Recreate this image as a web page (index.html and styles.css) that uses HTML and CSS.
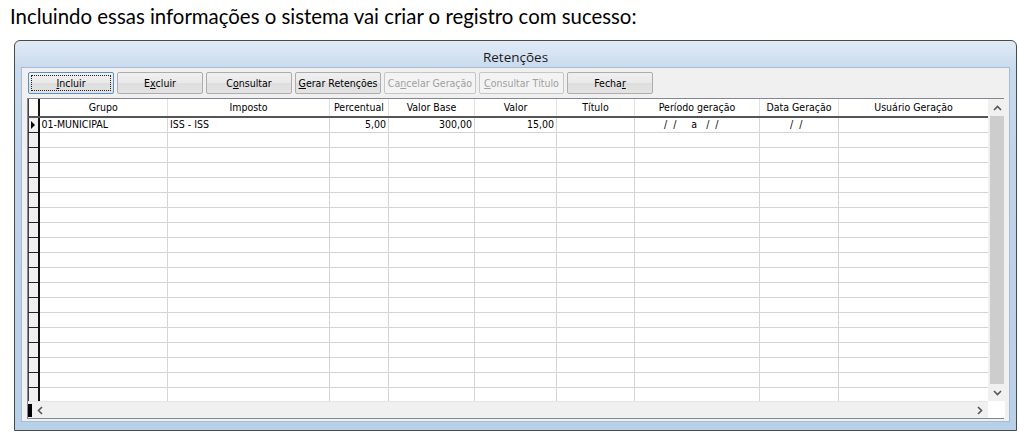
FILE: index.html
```html
<!DOCTYPE html>
<html lang="pt-BR">
<head>
<meta charset="utf-8">
<title>Retenções</title>
<link rel="stylesheet" href="styles.css">
</head>
<body>
<p class="caption">Incluindo essas informações o sistema vai criar o registro com sucesso:</p>
<div class="window">
  <div class="title">Retenções</div>
  <div class="client">
    <div class="toolbar">
      <button class="btn focus w86"><span class="focusrect"><u>I</u>ncluir</span></button>
      <button class="btn w86">E<u>x</u>cluir</button>
      <button class="btn w86">C<u>o</u>nsultar</button>
      <button class="btn w86"><u>G</u>erar Retenções</button>
      <button class="btn dis w92">Ca<u>n</u>celar Geração</button>
      <button class="btn dis w85"><u>C</u>onsultar Título</button>
      <button class="btn w86">Fecha<u>r</u></button>
    </div>
    <div class="grid">
      <div class="data">
        <table class="tbl">
          <colgroup>
            <col class="c-ind"><col class="c-grupo"><col class="c-imp"><col class="c-perc"><col class="c-vb"><col class="c-val"><col class="c-tit"><col class="c-per"><col class="c-dg"><col class="c-ug">
          </colgroup>
          <thead>
            <tr>
              <th class="ind"></th><th>Grupo</th><th>Imposto</th><th>Percentual</th><th>Valor Base</th><th>Valor</th><th>Título</th><th>Período geração</th><th>Data Geração</th><th>Usuário Geração</th>
            </tr>
          </thead>
          <tbody>
            <tr>
              <td class="ind"><span class="arrow"></span></td><td>01-MUNICIPAL</td><td>ISS - ISS</td><td class="r">5,00</td><td class="r">300,00</td><td class="r">15,00</td><td></td><td class="mask pm">/  /     a   /  /</td><td class="mask dm">/  /</td><td></td>
            </tr>
            <tr><td class="ind"></td><td></td><td></td><td></td><td></td><td></td><td></td><td></td><td></td><td></td></tr>
            <tr><td class="ind"></td><td></td><td></td><td></td><td></td><td></td><td></td><td></td><td></td><td></td></tr>
            <tr><td class="ind"></td><td></td><td></td><td></td><td></td><td></td><td></td><td></td><td></td><td></td></tr>
            <tr><td class="ind"></td><td></td><td></td><td></td><td></td><td></td><td></td><td></td><td></td><td></td></tr>
            <tr><td class="ind"></td><td></td><td></td><td></td><td></td><td></td><td></td><td></td><td></td><td></td></tr>
            <tr><td class="ind"></td><td></td><td></td><td></td><td></td><td></td><td></td><td></td><td></td><td></td></tr>
            <tr><td class="ind"></td><td></td><td></td><td></td><td></td><td></td><td></td><td></td><td></td><td></td></tr>
            <tr><td class="ind"></td><td></td><td></td><td></td><td></td><td></td><td></td><td></td><td></td><td></td></tr>
            <tr><td class="ind"></td><td></td><td></td><td></td><td></td><td></td><td></td><td></td><td></td><td></td></tr>
            <tr><td class="ind"></td><td></td><td></td><td></td><td></td><td></td><td></td><td></td><td></td><td></td></tr>
            <tr><td class="ind"></td><td></td><td></td><td></td><td></td><td></td><td></td><td></td><td></td><td></td></tr>
            <tr><td class="ind"></td><td></td><td></td><td></td><td></td><td></td><td></td><td></td><td></td><td></td></tr>
            <tr><td class="ind"></td><td></td><td></td><td></td><td></td><td></td><td></td><td></td><td></td><td></td></tr>
            <tr><td class="ind"></td><td></td><td></td><td></td><td></td><td></td><td></td><td></td><td></td><td></td></tr>
            <tr><td class="ind"></td><td></td><td></td><td></td><td></td><td></td><td></td><td></td><td></td><td></td></tr>
            <tr><td class="ind"></td><td></td><td></td><td></td><td></td><td></td><td></td><td></td><td></td><td></td></tr>
            <tr><td class="ind"></td><td></td><td></td><td></td><td></td><td></td><td></td><td></td><td></td><td></td></tr>
            <tr><td class="ind"></td><td></td><td></td><td></td><td></td><td></td><td></td><td></td><td></td><td></td></tr>
            <tr><td class="ind"></td><td></td><td></td><td></td><td></td><td></td><td></td><td></td><td></td><td></td></tr>
          </tbody>
        </table>
      </div>
      <div class="vscroll">
        <div class="sbtn">
          <svg width="9" height="6" viewBox="0 0 9 6"><polyline points="1,5 4.5,1.5 8,5" fill="none" stroke="#555" stroke-width="1.6"/></svg>
        </div>
        <div class="thumb"></div>
        <div class="sbtn">
          <svg width="9" height="6" viewBox="0 0 9 6"><polyline points="1,1 4.5,4.5 8,1" fill="none" stroke="#555" stroke-width="1.6"/></svg>
        </div>
      </div>
      <div class="hscroll">
        <span class="hthumb"></span>
        <span class="hbtn">
          <svg width="6" height="9" viewBox="0 0 6 9"><polyline points="5,1 1.5,4.5 5,8" fill="none" stroke="#555" stroke-width="1.6"/></svg>
        </span>
        <span class="htrack"></span>
        <span class="hbtn">
          <svg width="6" height="9" viewBox="0 0 6 9"><polyline points="1,1 4.5,4.5 1,8" fill="none" stroke="#555" stroke-width="1.6"/></svg>
        </span>
      </div>
      <div class="corner"></div>
    </div>
  </div>
</div>
</body>
</html>
```

FILE: styles.css
```css
* { box-sizing: border-box; }

html, body {
  margin: 0;
  padding: 0;
  background: #ffffff;
}

body {
  width: 1019px;
  height: 432px;
  overflow: hidden;
}

.caption {
  margin: 0;
  height: 40px;
  padding: 3px 0 0 10px;
  font-family: Lato, "Open Sans", "Liberation Sans", sans-serif;
  font-size: 20.4px;
  line-height: 26px;
  color: #000;
}

.window {
  margin-left: 14px;
  width: 1003px;
  height: 391px;
  border: 1px solid #4b4b4b;
  border-radius: 6px 6px 0 0;
  background: linear-gradient(to bottom, #e2ebf6 0px, #c9dbee 26px, #bfd4eb 120px, #b9d0e9 100%);
  padding: 0 6px 8px 6px;
  display: flex;
  flex-direction: column;
}

.title {
  height: 26px;
  line-height: 33px;
  text-align: center;
  font-family: "Open Sans", "Liberation Sans", sans-serif;
  font-size: 13.5px;
  color: #1b1b1b;
}

.client {
  flex: 1;
  background: #f0f0f0;
  border: 1px solid #a7bbd3;
  padding: 4px 5px 2px 5px;
  display: flex;
  flex-direction: column;
  gap: 4px;
  font-family: "DejaVu Sans Condensed", "Liberation Sans", sans-serif;
  font-size: 10.5px;
  color: #000;
}

.toolbar {
  display: flex;
  gap: 3px;
  padding-left: 1px;
  height: 22px;
}

.btn {
  height: 22px;
  padding: 0;
  font: inherit;
  color: #000;
  border: 1px solid #adadad;
  border-radius: 2px;
  background: linear-gradient(to bottom, #f0f0f0 0%, #e9e9e9 50%, #dedede 51%, #e3e3e3 100%);
  display: flex;
  align-items: center;
  justify-content: center;
  white-space: nowrap;
}

.w86 { width: 86px; }
.w85 { width: 85px; }
.w92 { width: 92px; }

.btn.focus {
  border-color: #5b8fc6;
  padding: 2px;
}

.focusrect {
  width: 100%;
  height: 100%;
  border: 1px dotted #222;
  display: flex;
  align-items: center;
  justify-content: center;
}

.btn.dis {
  color: #a0a0a0;
  border-color: #c6c6c6;
  background: #f3f3f3;
}

.grid {
  height: 321px;
  border: 1px solid #828790;
  background: #ffffff;
  display: grid;
  grid-template-columns: 960px 17px;
  grid-template-rows: 302px 17px;
}

.data {
  overflow: hidden;
}

.tbl {
  table-layout: fixed;
  border-collapse: collapse;
  width: 960px;
}

.c-ind { width: 10px; }
.c-grupo { width: 129px; }
.c-imp { width: 162px; }
.c-perc { width: 59px; }
.c-vb { width: 86px; }
.c-val { width: 82px; }
.c-tit { width: 78px; }
.c-per { width: 125px; }
.c-dg { width: 79px; }
.c-ug { width: 150px; }

.tbl th {
  height: 18px;
  padding: 0 2px;
  font-weight: normal;
  text-align: center;
  border-right: 1px solid #e2e2e2;
  border-bottom: 2px solid #555555;
  white-space: nowrap;
  overflow: hidden;
  line-height: 15px;
}

.tbl td {
  height: 15px;
  padding: 0 2px;
  border-right: 1px solid #d4d4d4;
  border-bottom: 1px solid #d4d4d4;
  white-space: nowrap;
  overflow: hidden;
  line-height: 13px;
}

.tbl .r { text-align: right; }

.tbl .mask { white-space: pre; }
.tbl .pm { padding-left: 29px; }
.tbl .dm { padding-left: 30px; }

.tbl .ind {
  background: #f0f0f0;
  border-left: 1px solid #444;
  border-right: 2px solid #111;
  border-bottom: 1px solid #222;
  padding: 0;
  position: relative;
}

.tbl th.ind {
  background: #fafafa;
  border-bottom: 2px solid #555;
}

.arrow {
  position: absolute;
  left: 2px;
  top: 3px;
  width: 0;
  height: 0;
  border-top: 4px solid transparent;
  border-bottom: 4px solid transparent;
  border-left: 4px solid #000;
}

.vscroll {
  background: #f0f0f0;
  display: flex;
  flex-direction: column;
  border-left: 1px solid #f0f0f0;
}

.sbtn {
  height: 17px;
  display: flex;
  align-items: center;
  justify-content: center;
}

.thumb {
  flex: 1;
  margin: 0 1px;
  background: #cdcdcd;
}

.hscroll {
  background: #f0f0f0;
  display: flex;
  align-items: center;
  border-top: 1px solid #e6e6e6;
}

.hthumb {
  width: 4px;
  height: 13px;
  background: #000;
}

.hbtn {
  width: 16px;
  height: 17px;
  display: flex;
  align-items: center;
  justify-content: center;
}

.htrack {
  flex: 1;
}

.corner {
  background: #ffffff;
}
```
